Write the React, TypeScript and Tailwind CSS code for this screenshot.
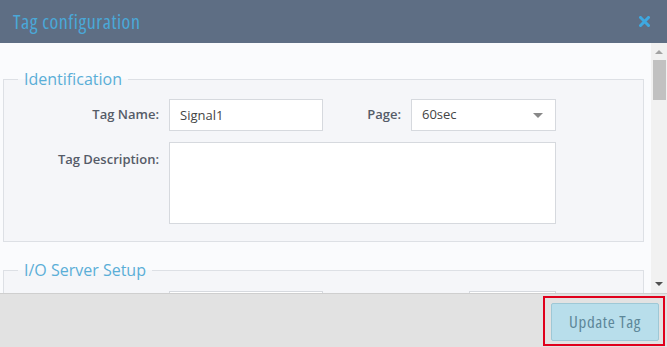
import React from "react";

const Label: React.FC<{ children: React.ReactNode; className?: string }> = ({ children, className }) => (
  <label className={`shrink-0 text-right text-[13px] font-semibold text-[#555c68] ${className ?? ""}`}>
    {children}
  </label>
);

const App: React.FC = () => {
  return (
    <div className="flex h-[347px] w-[667px] flex-col overflow-hidden bg-[#fafbfd] font-['Open_Sans',sans-serif]">
      {/* header */}
      <div className="flex h-[43px] shrink-0 items-center justify-between bg-[#5e6e84] pl-[13px] pr-[17px]">
        <h2 className="text-[20px] font-normal tracking-[0.5px] text-[#4aa8d8] [font-stretch:75%]">Tag configuration</h2>
        <svg width="11" height="11" viewBox="0 0 11 11" aria-label="close">
          <path d="M1.5 1.5 L9.5 9.5 M9.5 1.5 L1.5 9.5" stroke="#3ea8e0" strokeWidth="3" strokeLinecap="square" />
        </svg>
      </div>

      {/* body */}
      <div className="flex min-h-0 flex-1">
        <div className="min-w-0 flex-1 overflow-hidden pl-[3px] pr-[7px] pt-[25px]">
          <fieldset className="border border-[#dde0e5] bg-[#f5f6f9] px-[14px] pb-[17px] pt-[9px]">
            <legend className="px-[6px] text-[16px] font-normal leading-[22px] text-[#5aaed7]">
              Identification
            </legend>
            <div className="flex items-center">
              <Label className="w-[141px]">Tag Name:</Label>
              <input
                readOnly
                value="Signal1"
                className="ml-[10px] h-[32px] w-[154px] border border-[#d6d9de] bg-white px-[10px] text-[13px] text-[#444] outline-none"
              />
              <Label className="w-[78px]">Page:</Label>
              <div className="relative ml-[10px] flex h-[32px] w-[145px] items-center border border-[#d6d9de] bg-white px-[10px] text-[13px] text-[#444]">
                60sec
                <span className="absolute right-[12px] top-[13px] h-0 w-0 border-x-[5px] border-t-[5px] border-x-transparent border-t-[#888]" />
              </div>
            </div>
            <div className="mt-[11px] flex items-start">
              <Label className="w-[141px] pt-[8px]">Tag Description:</Label>
              <textarea
                readOnly
                className="ml-[10px] h-[82px] w-[387px] resize-none border border-[#d6d9de] bg-white outline-none"
              />
            </div>
          </fieldset>

          <fieldset className="mt-[17px] border border-[#dde0e5] bg-[#f5f6f9] px-[14px] pb-[17px] pt-[10px]">
            <legend className="px-[6px] text-[16px] font-normal leading-[22px] text-[#5aaed7]">
              I/O Server Setup
            </legend>
            <div className="flex items-center">
              <div className="w-[141px] shrink-0" />
              <div className="ml-[10px] h-[32px] w-[154px] border border-[#d6d9de] bg-white" />
              <div className="w-[136px] shrink-0" />
              <div className="ml-[10px] h-[32px] w-[87px] border border-[#d6d9de] bg-white" />
            </div>
          </fieldset>
        </div>

        {/* scrollbar */}
        <div className="flex w-[16px] shrink-0 flex-col items-center bg-[#f1f1f1]">
          <span className="mt-[7px] h-0 w-0 border-x-[4px] border-b-[4px] border-x-transparent border-b-[#a3a3a3]" />
          <div className="mt-[6px] h-[40px] w-[13px] bg-[#c1c1c1]" />
          <div className="flex-1" />
          <span className="mb-[7px] h-0 w-0 border-x-[4px] border-t-[4px] border-x-transparent border-t-[#505050]" />
        </div>
      </div>

      {/* footer */}
      <div className="flex h-[54px] shrink-0 justify-end border-t border-[#cfcfcf] bg-[#e2e2e2] pr-[2px] pt-[2px]">
        <div className="h-[50px] border-2 border-[#e0001b] pb-[3px] pl-[6px] pr-[4px] pt-[5px]">
          <button className="h-[38px] w-[108px] rounded-[2px] border border-[#9ec8d6] bg-[#b8deeb] text-[17px] tracking-[0.6px] text-[#5d8799] [font-stretch:75%]">
            Update Tag
          </button>
        </div>
      </div>
    </div>
  );
};

export default App;
